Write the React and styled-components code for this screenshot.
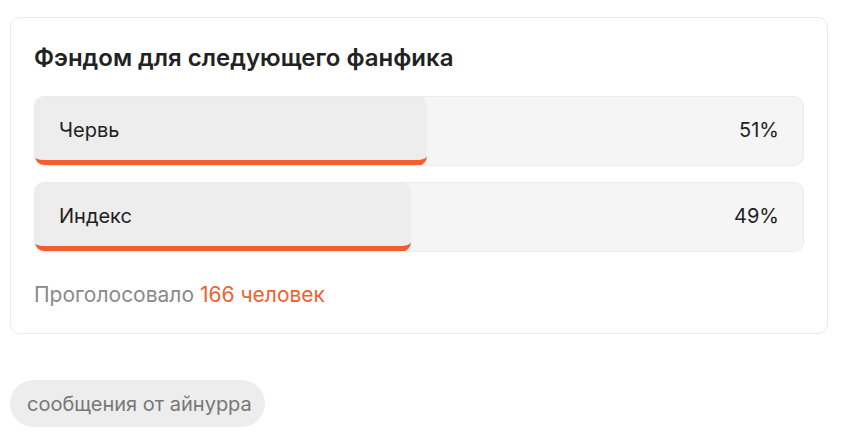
import React from 'react'
import styled, { createGlobalStyle } from 'styled-components'

const GlobalStyle = createGlobalStyle`
  body {
    margin: 0;
    background: #ffffff;
    font-family: Inter, "Noto Sans", sans-serif;
  }
`;

const Page = styled.div`
  padding: 17px 10px 0 10px;
  display: flex;
  flex-direction: column;
  align-items: flex-start;
  gap: 46px;
`;

const Card = styled.div`
  width: 818px;
  box-sizing: border-box;
  border: 1px solid #e9e9e9;
  border-radius: 10px;
  padding: 25px 23px 25px 23px;
  display: flex;
  flex-direction: column;
`;

const Title = styled.h3`
  margin: 0 0 23px 0;
  font-size: 24px;
  line-height: 30px;
  font-weight: 600;
  color: #222222;
`;

const Options = styled.div`
  display: flex;
  flex-direction: column;
  gap: 16px;
`;

const Option = styled.div`
  position: relative;
  height: 70px;
  box-sizing: border-box;
  border: 1px solid #ebebeb;
  border-radius: 10px;
  background: #f5f5f5;
  overflow: hidden;
  display: flex;
  align-items: center;
  justify-content: space-between;
  padding: 0 24px;
  font-size: 20px;
  color: #222222;
`;

const Fill = styled.div`
  position: absolute;
  left: -1px;
  top: -1px;
  bottom: -1px;
  background: #ededed;
  border-radius: 10px;
  border-bottom: 6px solid #f15f2c;
  box-sizing: border-box;
`;

const Label = styled.span`
  position: relative;
  line-height: 26px;
  margin-top: -2px;
`;

const Percent = styled.span`
  position: relative;
  line-height: 26px;
  margin-top: -2px;
`;

const Footer = styled.div`
  margin-top: 30px;
  font-size: 21px;
  line-height: 26px;
  color: #8a8a8a;
`;

const Accent = styled.span`
  color: #f15f2c;
`;

const Tag = styled.div`
  height: 47px;
  box-sizing: border-box;
  padding: 0 13px 0 17px;
  border-radius: 24px;
  background: #ededed;
  color: #777777;
  font-size: 20px;
  display: flex;
  align-items: center;
`;

const options = [
  { label: 'Червь', percent: 51 },
  { label: 'Индекс', percent: 49 },
];

export default function App() {
  return (
    <>
      <GlobalStyle />
      <Page>
        <Card>
          <Title>Фэндом для следующего фанфика</Title>
          <Options>
            {options.map((o) => (
              <Option key={o.label}>
                <Fill style={{ width: `calc(${o.percent}% + 1px)` }} />
                <Label>{o.label}</Label>
                <Percent>{o.percent}%</Percent>
              </Option>
            ))}
          </Options>
          <Footer>
            Проголосовало <Accent>166 человек</Accent>
          </Footer>
        </Card>
        <Tag>сообщения от айнурра</Tag>
      </Page>
    </>
  )
}
